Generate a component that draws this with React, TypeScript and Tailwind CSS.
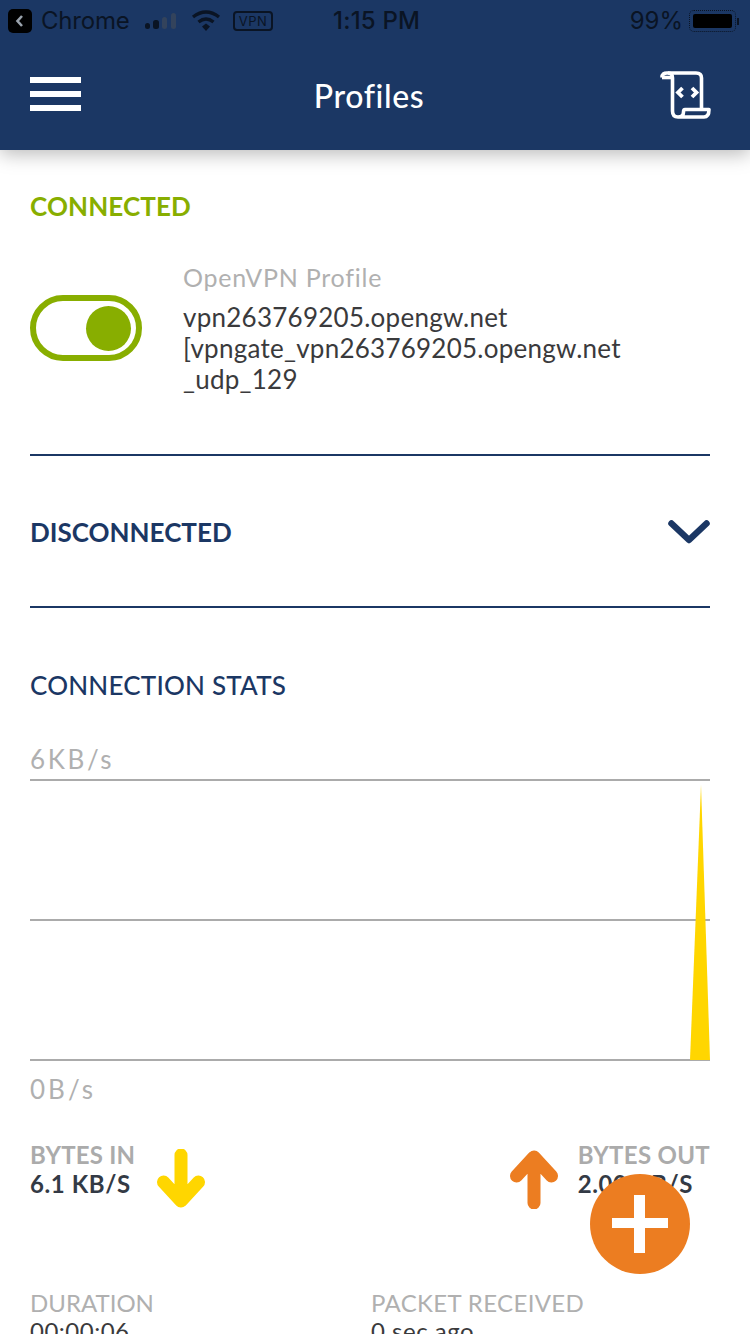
const FONT = "font-['Lato','Open_Sans',sans-serif]";

function StatusBar() {
  return (
    <div className="flex h-10 items-center justify-between pl-2 pr-[11px] pt-[2px] font-['Inter',sans-serif] text-[24px] leading-10 text-[#0a1424]">
      <div className="flex items-center">
        <div className="flex h-6 w-6 items-center justify-center rounded-[5px] bg-black">
          <svg width="12" height="14" viewBox="0 0 12 14" fill="none">
            <path d="M8 2 L3.5 7 L8 12" stroke="#9aa3ad" strokeWidth="2.6" />
          </svg>
        </div>
        <span className="ml-[9px] w-[86px] tracking-[-0.2px]">Chrome</span>
        <svg className="ml-[17px]" width="34" height="20" viewBox="0 0 34 20">
          <rect x="1" y="12" width="5" height="6" rx="2.5" fill="#0a1424" />
          <rect x="9" y="9" width="6" height="9" rx="2.5" fill="#0a1424" />
          <rect x="18" y="6" width="5" height="12" rx="2.5" fill="#33435c" />
          <rect x="27" y="2" width="5" height="16" rx="2.5" fill="#33435c" />
        </svg>
        <svg className="ml-[13px]" width="30" height="22" viewBox="0 0 30 22" fill="none">
          <path d="M2 7 Q15 -3 28 7" stroke="#0a1424" strokeWidth="3.4" />
          <path d="M7.5 12 Q15 6 22.5 12" stroke="#0a1424" strokeWidth="3.4" />
          <path d="M11 16.5 L15 13.5 L19 16.5 L15 21 Z" fill="#0a1424" />
        </svg>
        <div className="ml-[12px] flex h-[20px] w-[40px] items-center justify-center rounded-[4px] border-2 border-[#0a1424] text-[13px] leading-none tracking-[0.5px]">
          VPN
        </div>
      </div>
      <span className="absolute left-[333px] top-[1px] font-medium tracking-[0.2px]">1:15 PM</span>
      <div className="flex items-center">
        <span className="font-normal">99%</span>
        <div className="ml-[6px] flex h-[22px] w-[47px] items-center rounded-[5px] border border-dotted border-[#0a1424] p-[3px]">
          <div className="h-full w-full rounded-[2px] bg-black" />
        </div>
        <div className="ml-[1px] h-[7px] w-[2px] bg-[#0a1424]" />
      </div>
    </div>
  );
}

function Header() {
  return (
    <div className="relative z-10 h-[150px] bg-[#1b3764] shadow-[0_4px_18px_rgba(0,0,0,0.28)]">
      <StatusBar />
      <div className="flex h-[110px] items-center justify-between pb-[2px] pl-[30px] pr-10">
        <div className="flex w-[51px] flex-col gap-2">
          <div className="h-[6px] bg-white" />
          <div className="h-[6px] bg-white" />
          <div className="h-[6px] bg-white" />
        </div>
        <span className={`${FONT} -ml-[3px] mt-[3px] text-[32px] font-medium leading-10 tracking-[0.6px] text-white`}>
          Profiles
        </span>
        <svg className="-mr-[1px] mt-[2px]" width="51" height="48" viewBox="0 0 51 48" fill="none" stroke="white" strokeWidth="3.6">
          <path d="M2 6.5 C2 3 4 2 7 2 H36 C39.5 2 41.5 3.5 41.5 7 V37" strokeLinejoin="round" />
          <path d="M2 6.5 H11" />
          <path d="M8 2 C11 2 12.5 4 12.5 7 V40 C12.5 44 14.5 46 18 46 H44 C47 46 49 43.5 49 38.5 H25 C24 38.5 23.5 39.5 23.5 41 C23.5 44 22 46 18 46" strokeLinejoin="round" />
          <path d="M22.5 17 L18 21.5 L22.5 26" strokeWidth="3.8" />
          <path d="M32 17 L36.5 21.5 L32 26" strokeWidth="3.8" />
        </svg>
      </div>
    </div>
  );
}

function ConnectedSection() {
  return (
    <div className="ml-[30px] mr-10 h-[306px] border-b-2 border-[#1b3764] pt-[40px]">
      <div className="text-[26px] font-bold leading-8 tracking-[0.1px] text-[#88ae00]">CONNECTED</div>
      <div className="mt-[39px] flex">
        <div className="mt-[34px] flex h-[66px] w-[112px] items-center justify-end rounded-full border-[6px] border-[#88ae00] pr-[5px]">
          <div className="h-[45px] w-[45px] rounded-full bg-[#88ae00]" />
        </div>
        <div className="ml-[41px]">
          <div className="text-[25px] leading-[32px] tracking-[0.75px] text-[#b0b0b0]">OpenVPN Profile</div>
          <div className="mt-[9px] text-[26px] leading-[31px] tracking-[0.25px] text-[#3a3a3c]">
            <div>vpn263769205.opengw.net</div>
            <div>[vpngate_vpn263769205.opengw.net</div>
            <div>_udp_129</div>
          </div>
        </div>
      </div>
    </div>
  );
}

function DisconnectedSection() {
  return (
    <div className="ml-[30px] mr-10 flex h-[152px] items-center justify-between border-b-2 border-[#1b3764] pt-[2px]">
      <span className="text-[26px] font-bold leading-8 text-[#1b3764]">DISCONNECTED</span>
      <svg width="42" height="24" viewBox="0 0 42 24" fill="none">
        <path d="M3.5 3.5 L21 20 L38.5 3.5" stroke="#1b3764" strokeWidth="6.5" strokeLinecap="round" strokeLinejoin="round" />
      </svg>
    </div>
  );
}

function Chart() {
  return (
    <div className="relative mt-[4px] flex h-[282px] flex-col justify-between">
      <div className="h-[2px] bg-[#ababab]" />
      <div className="h-[2px] bg-[#ababab]" />
      <div className="h-[2px] bg-[#ababab]" />
      <svg className="absolute right-0 top-[6px]" width="20" height="275" viewBox="0 0 20 275">
        <path d="M11 0 L20 275 H0 Z" fill="#ffd600" />
      </svg>
    </div>
  );
}

function ArrowDown({ color }: { color: string }) {
  return (
    <svg width="48" height="60" viewBox="0 0 48 60" fill="none">
      <path d="M24 6 V52 M6.5 33 L24 52 L41.5 33" stroke={color} strokeWidth="13" strokeLinecap="round" strokeLinejoin="round" />
    </svg>
  );
}

function StatsSection() {
  return (
    <div className="ml-[30px] mr-10">
      <div className="mt-[61px] text-[26px] font-medium leading-8 tracking-[0.2px] text-[#1b3764]">
        CONNECTION STATS
      </div>
      <div className="mt-[42px] text-[26px] leading-8 tracking-[2.6px] text-[#b0b0b0]">6KB/s</div>
      <Chart />
      <div className="mt-[12px] text-[26px] leading-8 tracking-[3px] text-[#b0b0b0]">0B/s</div>
      <div className="mt-[36px] flex items-start justify-between">
        <div className="flex">
          <div>
            <div className="text-[24px] font-bold leading-[28px] tracking-[0.2px] text-[#ababab]">BYTES IN</div>
            <div className="text-[24px] font-bold leading-[30px] tracking-[0.6px] text-[#333a45]">6.1 KB/S</div>
          </div>
          <div className="ml-[22px] mt-[8px]">
            <ArrowDown color="#ffd600" />
          </div>
        </div>
        <div className="flex">
          <div className="mr-[20px] mt-[8px] rotate-180">
            <ArrowDown color="#ec7d21" />
          </div>
          <div>
            <div className="text-[24px] font-bold leading-[28px] tracking-[0.3px] text-[#ababab]">BYTES OUT</div>
            <div className="text-[24px] font-bold leading-[30px] tracking-[0.6px] text-[#333a45]">2.00 KB/S</div>
          </div>
        </div>
      </div>
      <div className="mt-[80px] grid grid-cols-[341px_1fr]">
        <div>
          <div className="text-[24px] leading-[28px] text-[#b0b0b0]">DURATION</div>
          <div className="text-[24px] leading-[28px] tracking-[0.5px] text-[#3a3a3c]">00:00:06</div>
        </div>
        <div>
          <div className="text-[24px] leading-[28px] tracking-[0.35px] text-[#b0b0b0]">PACKET RECEIVED</div>
          <div className="text-[24px] leading-[28px] tracking-[0.5px] text-[#3a3a3c]">0 sec ago</div>
        </div>
      </div>
    </div>
  );
}

export default function App() {
  return (
    <div className={`${FONT} relative h-[1334px] w-[750px] overflow-hidden bg-white`}>
      <Header />
      <ConnectedSection />
      <DisconnectedSection />
      <StatsSection />
      {/* floating add button */}
      <div className="absolute left-[590px] top-[1174px] z-20 flex h-[100px] w-[100px] items-center justify-center rounded-full bg-[#ec7d21]">
        <svg width="56" height="58" viewBox="0 0 56 58">
          <path d="M22 0 H33 V23 H56 V33 H33 V58 H22 V33 H0 V23 H22 Z" fill="white" />
        </svg>
      </div>
    </div>
  );
}
